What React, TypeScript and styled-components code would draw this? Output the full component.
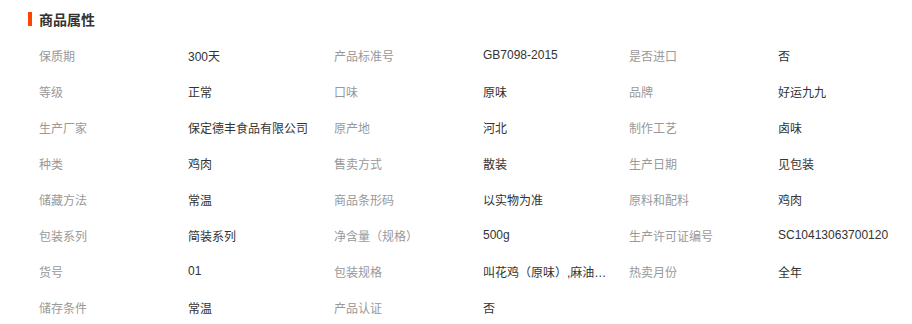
import React from "react"
import styled, { createGlobalStyle } from "styled-components"

const GlobalStyle = createGlobalStyle`
  body {
    margin: 0;
    background: #fff;
    font-family: "Liberation Sans", "Noto Sans CJK SC", sans-serif;
  }
`

const Panel = styled.section`
  width: 912px;
  height: 324px;
  overflow: hidden;
  padding: 10px 0 0 28px;
  box-sizing: border-box;
`

const Title = styled.h3`
  margin: 0;
  display: flex;
  align-items: center;
  gap: 7px;
  height: 18px;
  font-size: 14px;
  font-weight: bold;
  color: #333;
  font-family: "Noto Sans CJK SC", sans-serif;

  &::before {
    content: "";
    width: 4px;
    height: 14px;
    background: #ff4400;
  }
`

const Grid = styled.ul`
  list-style: none;
  margin: 9px 0 0;
  padding: 0 0 0 11px;
  display: grid;
  grid-template-columns: repeat(3, 295px);
  grid-auto-rows: 36px;
`

const Item = styled.li`
  display: flex;
  align-items: center;
  font-size: 12px;
`

const Label = styled.span`
  width: 149px;
  color: #999;
  flex-shrink: 0;
`

const Value = styled.span`
  width: 124px;
  color: #333;
  white-space: nowrap;
  overflow: hidden;
  text-overflow: ellipsis;
`

const attrs: [string, string][] = [
  ["保质期", "300天"],
  ["产品标准号", "GB7098-2015"],
  ["是否进口", "否"],
  ["等级", "正常"],
  ["口味", "原味"],
  ["品牌", "好运九九"],
  ["生产厂家", "保定德丰食品有限公司"],
  ["原产地", "河北"],
  ["制作工艺", "卤味"],
  ["种类", "鸡肉"],
  ["售卖方式", "散装"],
  ["生产日期", "见包装"],
  ["储藏方法", "常温"],
  ["商品条形码", "以实物为准"],
  ["原料和配料", "鸡肉"],
  ["包装系列", "简装系列"],
  ["净含量（规格）", "500g"],
  ["生产许可证编号", "SC10413063700120"],
  ["货号", "01"],
  ["包装规格", "叫花鸡（原味）,麻油鸡（原味）"],
  ["热卖月份", "全年"],
  ["储存条件", "常温"],
  ["产品认证", "否"],
]

export default function App() {
  return (
    <Panel>
      <GlobalStyle />
      <Title>商品属性</Title>
      <Grid>
        {attrs.map(([k, v]) => (
          <Item key={k}>
            <Label>{k}</Label>
            <Value>{v}</Value>
          </Item>
        ))}
      </Grid>
    </Panel>
  )
}
